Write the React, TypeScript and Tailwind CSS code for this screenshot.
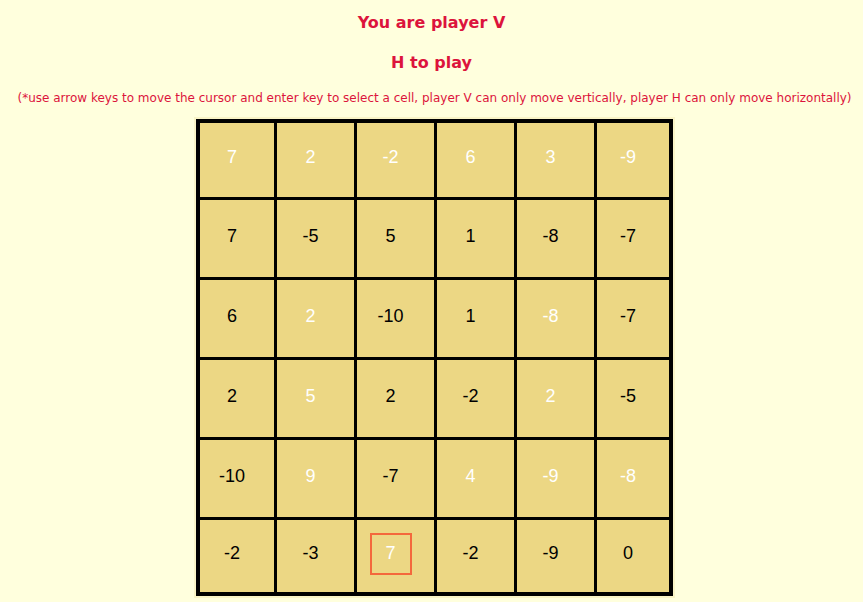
import React from "react";

type Cell = { v: number; white: boolean };

const rows: Cell[][] = [
  [
    { v: 7, white: true },
    { v: 2, white: true },
    { v: -2, white: true },
    { v: 6, white: true },
    { v: 3, white: true },
    { v: -9, white: true },
  ],
  [
    { v: 7, white: false },
    { v: -5, white: false },
    { v: 5, white: false },
    { v: 1, white: false },
    { v: -8, white: false },
    { v: -7, white: false },
  ],
  [
    { v: 6, white: false },
    { v: 2, white: true },
    { v: -10, white: false },
    { v: 1, white: false },
    { v: -8, white: true },
    { v: -7, white: false },
  ],
  [
    { v: 2, white: false },
    { v: 5, white: true },
    { v: 2, white: false },
    { v: -2, white: false },
    { v: 2, white: true },
    { v: -5, white: false },
  ],
  [
    { v: -10, white: false },
    { v: 9, white: true },
    { v: -7, white: false },
    { v: 4, white: true },
    { v: -9, white: true },
    { v: -8, white: true },
  ],
  [
    { v: -2, white: false },
    { v: -3, white: false },
    { v: 7, white: true },
    { v: -2, white: false },
    { v: -9, white: false },
    { v: 0, white: false },
  ],
];

const cursor = { r: 5, c: 2 };

export default function App() {
  return (
    <div className="min-h-[602px] w-full bg-[#ffffdd] flex flex-col items-center font-['Comic_Sans_MS','DejaVu_Sans',sans-serif] text-[#dc143c]">
      <h1 className="mt-[13px] h-[20px] leading-[20px] text-[16px] font-bold">You are player V</h1>
      <h2 className="mt-[20px] h-[20px] leading-[20px] text-[16px] font-bold">H to play</h2>
      <p className="mt-[15px] ml-[6px] h-[20px] leading-[20px] text-[12px] whitespace-nowrap">
        (*use arrow keys to move the cursor and enter key to select a cell, player V can only move vertically, player H can only move horizontally)
      </p>

      <div className="mt-[9px] ml-[6px] border-2 border-[#f9f4c6]">
        <div className="border-4 border-black bg-black grid grid-cols-[74px_77px_77px_77px_77px_72px] grid-rows-[74px_77px_77px_77px_77px_72px] gap-[3px] font-['Liberation_Sans',Arial,sans-serif]">
          {rows.map((row, r) =>
            row.map((cell, c) => {
              const sel = r === cursor.r && c === cursor.c;
              return (
                <div
                  key={`${r}-${c}`}
                  className="bg-[#ecd784] flex items-center justify-center pr-[10px] pb-[5px]"
                >
                  <div
                    className={
                      "w-[42px] h-[42px] flex items-center justify-center text-[18px] " +
                      (cell.white ? "text-white " : "text-black ") +
                      (sel ? "border-2 border-[#f4683c]" : "")
                    }
                  >
                    {cell.v}
                  </div>
                </div>
              );
            })
          )}
        </div>
      </div>
    </div>
  );
}
